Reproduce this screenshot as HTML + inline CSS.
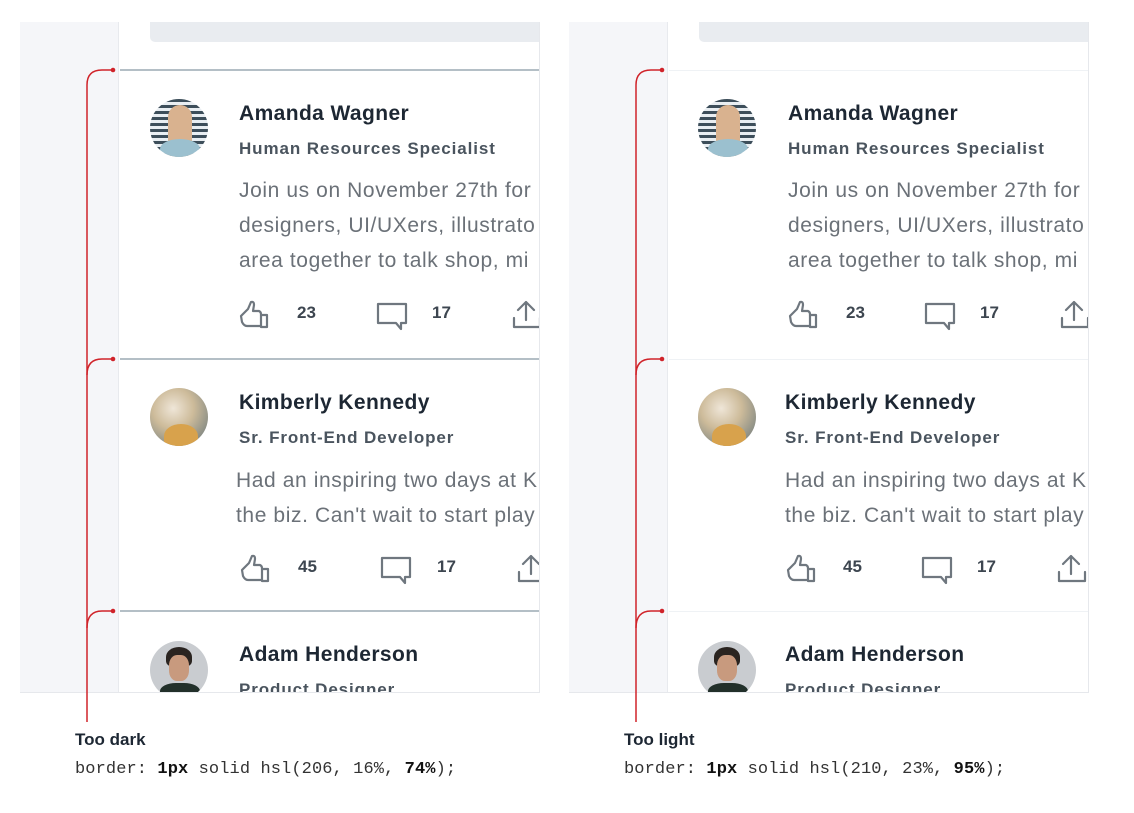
<!DOCTYPE html>
<html><head><meta charset="utf-8"><style>
*{margin:0;padding:0;box-sizing:border-box}
body{width:1134px;height:813px;background:#fff;position:relative;overflow:hidden;font-family:"Liberation Sans",sans-serif}
.panel{position:absolute;top:22px;width:520px;height:671px;overflow:hidden;background:#fff;border-right:1px solid #e6e8ec;border-bottom:1px solid #e6e8ec}
.side{position:absolute;left:0;top:0;width:99px;height:100%;background:#f5f6f9;border-right:1px solid #e8eaee}
.input{position:absolute;left:130px;top:-10px;width:400px;height:30px;background:#e9ecf0;border-radius:5px}
.sep{position:absolute;left:100px;width:420px;height:1px}
.dark .sep{background:#b4bfc6;height:2px}
.light .sep{background:#eff2f5}
.t{position:absolute;white-space:nowrap}
.name{font-size:21px;color:#1d2733;font-weight:bold;letter-spacing:0.4px}
.title{font-size:17px;color:#4a545e;font-weight:bold;letter-spacing:0.9px}
.body{font-size:21px;color:#6b7178;line-height:35px;letter-spacing:0.6px}
.cnt{font-size:17px;color:#3d4650;font-weight:bold}
.av{position:absolute;width:58px;height:58px;border-radius:50%;overflow:hidden}
.cap{position:absolute;font-size:17px;font-weight:bold;color:#1d2733}
.code{position:absolute;font-family:"Liberation Mono",monospace;font-size:17px;color:#333;letter-spacing:0.1px}
.code b{color:#111}
svg.br{position:absolute;left:0;top:0}
</style></head><body>

<div class="panel dark" style="left:20px">
 <div class="side"></div>
 <div class="input"></div>
 <div class="sep" style="top:47px"></div>
 <div class="sep" style="top:336px"></div>
 <div class="sep" style="top:588px"></div>
 <div class="av" style="left:130px;top:77px;background:repeating-linear-gradient(180deg,#3d4e5a 0 3px,#e9eef2 3px 6px)"><div style="position:absolute;left:18px;top:6px;width:24px;height:52px;border-radius:12px 12px 0 0;background:#d9b28f"></div><div style="position:absolute;left:10px;top:40px;width:40px;height:20px;background:#9bc0cf;border-radius:50% 50% 0 0"></div></div>
 <div class="t name" style="left:219px;top:80px">Amanda Wagner</div>
 <div class="t title" style="left:219px;top:117px">Human Resources Specialist</div>
 <div class="t body" style="left:219px;top:151px">Join us on November 27th for<br>designers, UI/UXers, illustrato<br>area together to talk shop, mi</div>
 <div class="av" style="left:130px;top:366px;background:radial-gradient(circle at 40% 35%,#efe6d8 0,#cdbb9a 40%,#8c8f86 75%,#5d665e 100%)"><div style="position:absolute;left:14px;top:36px;width:34px;height:24px;background:#d8a24c;border-radius:50% 50% 0 0"></div></div>
 <div class="t name" style="left:219px;top:369px">Kimberly Kennedy</div>
 <div class="t title" style="left:219px;top:406px">Sr. Front-End Developer</div>
 <div class="t body" style="left:216px;top:441px">Had an inspiring two days at K<br>the biz. Can't wait to start play</div>
 <div class="av" style="left:130px;top:619px;background:#c9ccd0"><div style="position:absolute;left:16px;top:6px;width:26px;height:20px;background:#2a2420;border-radius:50% 50% 30% 30%"></div><div style="position:absolute;left:19px;top:14px;width:20px;height:26px;background:#c89a7e;border-radius:40%"></div><div style="position:absolute;left:10px;top:42px;width:40px;height:20px;background:#22302a;border-radius:40% 40% 0 0"></div></div>
 <div class="t name" style="left:219px;top:621px">Adam Henderson</div>
 <div class="t title" style="left:219px;top:658px">Product Designer</div>
</div>

<div class="panel light" style="left:569px">
 <div class="side"></div>
 <div class="input"></div>
 <div class="sep" style="top:48px"></div>
 <div class="sep" style="top:337px"></div>
 <div class="sep" style="top:589px"></div>
 <div class="av" style="left:129px;top:77px;background:repeating-linear-gradient(180deg,#3d4e5a 0 3px,#e9eef2 3px 6px)"><div style="position:absolute;left:18px;top:6px;width:24px;height:52px;border-radius:12px 12px 0 0;background:#d9b28f"></div><div style="position:absolute;left:10px;top:40px;width:40px;height:20px;background:#9bc0cf;border-radius:50% 50% 0 0"></div></div>
 <div class="t name" style="left:219px;top:80px">Amanda Wagner</div>
 <div class="t title" style="left:219px;top:117px">Human Resources Specialist</div>
 <div class="t body" style="left:219px;top:151px">Join us on November 27th for<br>designers, UI/UXers, illustrato<br>area together to talk shop, mi</div>
 <div class="av" style="left:129px;top:366px;background:radial-gradient(circle at 40% 35%,#efe6d8 0,#cdbb9a 40%,#8c8f86 75%,#5d665e 100%)"><div style="position:absolute;left:14px;top:36px;width:34px;height:24px;background:#d8a24c;border-radius:50% 50% 0 0"></div></div>
 <div class="t name" style="left:216px;top:369px">Kimberly Kennedy</div>
 <div class="t title" style="left:216px;top:406px">Sr. Front-End Developer</div>
 <div class="t body" style="left:216px;top:441px">Had an inspiring two days at K<br>the biz. Can't wait to start play</div>
 <div class="av" style="left:129px;top:619px;background:#c9ccd0"><div style="position:absolute;left:16px;top:6px;width:26px;height:20px;background:#2a2420;border-radius:50% 50% 30% 30%"></div><div style="position:absolute;left:19px;top:14px;width:20px;height:26px;background:#c89a7e;border-radius:40%"></div><div style="position:absolute;left:10px;top:42px;width:40px;height:20px;background:#22302a;border-radius:40% 40% 0 0"></div></div>
 <div class="t name" style="left:216px;top:621px">Adam Henderson</div>
 <div class="t title" style="left:216px;top:658px">Product Designer</div>
</div>

<svg class="br" width="1134" height="813" fill="none">
 <defs>
  <clipPath id="cl"><rect x="120" y="22" width="419" height="670"/></clipPath>
  <clipPath id="cr"><rect x="669" y="22" width="419" height="670"/></clipPath>
  <g id="thumb" stroke="#6f777f" stroke-width="2.2" stroke-linejoin="round" stroke-linecap="round">
   <path d="M2 16 L9 9 L12 2 Q15 1 15 5 L14 11 L20 11 Q22 12 22 14 L22 26 L8 26 Q5 26 3 22 Z"/>
   <path d="M22 15 L28 15 L28 27 L22 27"/>
  </g>
  <g id="cmt" stroke="#6f777f" stroke-width="2.2" stroke-linejoin="round">
   <path d="M1 1 H29 V20 H24 V26 L19 20 H1 Z"/>
  </g>
  <g id="shr" stroke="#6f777f" stroke-width="2.2" stroke-linecap="round" stroke-linejoin="round">
   <path d="M14 2 V20 M6 10 L14 2 L22 10 M2 18 V27 H28 V18"/>
  </g>
 </defs>
 <g clip-path="url(#cl)">
 <use href="#thumb" x="239" y="300"/><use href="#cmt" x="377" y="303"/><use href="#shr" x="512" y="300"/>
 <use href="#thumb" x="240" y="554"/><use href="#cmt" x="381" y="557"/><use href="#shr" x="517" y="554"/>
 </g>
 <g clip-path="url(#cr)">
 <use href="#thumb" x="788" y="300"/><use href="#cmt" x="925" y="303"/><use href="#shr" x="1060" y="300"/>
 <use href="#thumb" x="786" y="554"/><use href="#cmt" x="922" y="557"/><use href="#shr" x="1057" y="554"/>
 </g>
 <g stroke="#d0232a" stroke-width="1.5">
  <path d="M87 722 V85 Q87 70 102 70 H113"/>
  <path d="M87 375 Q87 359 102 359 H113"/>
  <path d="M87 628 Q87 611 102 611 H113"/>
  <path d="M636 722 V85 Q636 70 651 70 H662"/>
  <path d="M636 375 Q636 359 651 359 H662"/>
  <path d="M636 628 Q636 611 651 611 H662"/>
 </g>
 <g fill="#d0232a">
  <circle cx="113" cy="70" r="2.3"/><circle cx="113" cy="359" r="2.3"/><circle cx="113" cy="611" r="2.3"/>
  <circle cx="662" cy="70" r="2.3"/><circle cx="662" cy="359" r="2.3"/><circle cx="662" cy="611" r="2.3"/>
 </g>
</svg>
<div class="t cnt" style="left:297px;top:303px">23</div>
<div class="t cnt" style="left:432px;top:303px">17</div>
<div class="t cnt" style="left:298px;top:557px">45</div>
<div class="t cnt" style="left:437px;top:557px">17</div>
<div class="t cnt" style="left:846px;top:303px">23</div>
<div class="t cnt" style="left:980px;top:303px">17</div>
<div class="t cnt" style="left:843px;top:557px">45</div>
<div class="t cnt" style="left:977px;top:557px">17</div>

<div class="cap" style="left:75px;top:730px">Too dark</div>
<div class="code" style="left:75px;top:760px">border: <b>1px</b> solid hsl(206, 16%, <b>74%</b>);</div>
<div class="cap" style="left:624px;top:730px">Too light</div>
<div class="code" style="left:624px;top:760px">border: <b>1px</b> solid hsl(210, 23%, <b>95%</b>);</div>
</body></html>
